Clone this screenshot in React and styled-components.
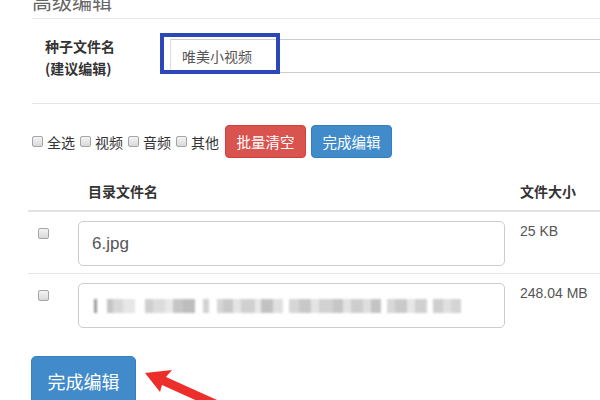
import React from 'react'
import styled, { createGlobalStyle } from 'styled-components'

const Global = createGlobalStyle`
  html, body { margin: 0; padding: 0; background: #fff; overflow: hidden; }
  body { font-family: "Liberation Sans", "Noto Sans CJK SC", sans-serif; color: #333; }
`

const blur = [
  { w: 3, c: '#9a9a9a' }, { w: 10, c: '#fff' }, { w: 6, c: '#c4c4c4' }, { w: 10, c: '#d8d8d8' },
  { w: 12, c: '#e6e6e6' }, { w: 10, c: '#fff' }, { w: 8, c: '#cfcfcf' }, { w: 12, c: '#dcdcdc' },
  { w: 8, c: '#e8e8e8' }, { w: 10, c: '#c6c6c6' }, { w: 12, c: '#bdbdbd' }, { w: 8, c: '#fff' },
  { w: 6, c: '#d2d2d2' }, { w: 8, c: '#fff' }, { w: 6, c: '#d6d6d6' }, { w: 10, c: '#c9c9c9' },
  { w: 8, c: '#e4e4e4' }, { w: 14, c: '#d0d0d0' }, { w: 6, c: '#e8e8e8' }, { w: 12, c: '#c2c2c2' },
  { w: 10, c: '#e0e0e0' }, { w: 6, c: '#fff' }, { w: 10, c: '#d6d6d6' }, { w: 12, c: '#c8c8c8' },
  { w: 8, c: '#e4e4e4' }, { w: 14, c: '#d2d2d2' }, { w: 10, c: '#c6c6c6' }, { w: 8, c: '#e2e2e2' },
  { w: 12, c: '#cdcdcd' }, { w: 8, c: '#dedede' }, { w: 10, c: '#c4c4c4' }, { w: 6, c: '#fff' },
  { w: 8, c: '#d8d8d8' }, { w: 12, c: '#cacaca' }, { w: 8, c: '#e6e6e6' }, { w: 12, c: '#d0d0d0' },
  { w: 6, c: '#fff' }, { w: 10, c: '#cfcfcf' }, { w: 8, c: '#e0e0e0' }, { w: 10, c: '#d4d4d4' },
]

const App = () => {
  return (
    <Page>
      <Global />
      <Title>高级编辑</Title>
      <FormRow>
        <FieldLabel>种子文件名<br />(建议编辑)</FieldLabel>
        <FieldWrap>
          <NameInput>唯美小视频</NameInput>
          <Highlight />
        </FieldWrap>
      </FormRow>

      <Toolbar>
        <Check /><CheckText>全选</CheckText>
        <Check /><CheckText>视频</CheckText>
        <Check /><CheckText>音频</CheckText>
        <Check /><CheckText>其他</CheckText>
        <Btn $danger>批量清空</Btn>
        <Btn>完成编辑</Btn>
      </Toolbar>

      <Table>
        <HeadRow>
          <span />
          <HeadCell $pad>目录文件名</HeadCell>
          <HeadCell>文件大小</HeadCell>
        </HeadRow>
        <Row>
          <CheckCell><Check /></CheckCell>
          <NameCell><FileBox>6.jpg</FileBox></NameCell>
          <SizeCell>25 KB</SizeCell>
        </Row>
        <Row $last>
          <CheckCell><Check /></CheckCell>
          <NameCell>
            <FileBox>
              <Blurred>
                {blur.map((b, i) => (
                  <BlurBit key={i} style={{ width: b.w, background: b.c }} />
                ))}
              </Blurred>
            </FileBox>
          </NameCell>
          <SizeCell>248.04 MB</SizeCell>
        </Row>
      </Table>

      <Footer>
        <BigBtn>完成编辑</BigBtn>
        <Arrow width="90" height="50" viewBox="0 0 90 50">
          <path d="M3 15 L30 12 L24 19 L75 42 L71 50 L20 27 L18 34 Z" fill="#ec2f2b" />
        </Arrow>
      </Footer>
    </Page>
  )
}

const Page = styled.div`
  margin-top: -14px;
  width: 600px;
`

const Title = styled.div`
  margin-left: 32px;
  font-family: "Noto Sans CJK SC", sans-serif;
  font-size: 20px;
  line-height: 32px;
  color: #666;
  border-bottom: 1px solid #e5e5e5;
`

const FormRow = styled.div`
  display: flex;
  margin-left: 32px;
  height: 85px;
  box-sizing: border-box;
  border-bottom: 1px solid #e5e5e5;
`

const FieldLabel = styled.div`
  margin: 16px 0 0 13px;
  width: 115px;
  font-family: "Noto Sans CJK SC", sans-serif;
  font-weight: bold;
  font-size: 14px;
  line-height: 22px;
  color: #333;
`

const FieldWrap = styled.div`
  position: relative;
  flex: 1;
  padding: 20px 0 0 10px;
`

const NameInput = styled.div`
  height: 34px;
  box-sizing: border-box;
  border: 1px solid #ccc;
  border-right: none;
  border-left-color: #ddd;
  padding-left: 11px;
  display: flex;
  align-items: center;
  font-family: "Noto Sans CJK SC", sans-serif;
  font-size: 14px;
  color: #555;
`

const Highlight = styled.div`
  position: absolute;
  left: 0;
  top: 14px;
  width: 120px;
  height: 41px;
  box-sizing: border-box;
  border: 4px solid #2b47b8;
  pointer-events: none;
`

const Toolbar = styled.div`
  display: flex;
  align-items: center;
  margin: 21px 0 0 32px;
  height: 33px;
`

const Check = styled.span`
  display: inline-block;
  width: 11px;
  height: 11px;
  box-sizing: border-box;
  border: 1px solid #a5a5a5;
  border-radius: 2px;
  background: linear-gradient(#f4f4f4, #d9d9d9);
  flex-shrink: 0;
`

const CheckText = styled.span`
  font-family: "Noto Sans CJK SC", sans-serif;
  font-size: 14px;
  color: #333;
  margin: 0 5px 0 4px;
`

const Btn = styled.button`
  width: 81px;
  height: 33px;
  padding: 0;
  margin-left: ${p => (p.$danger ? '1px' : '5px')};
  border: 1px solid ${p => (p.$danger ? '#d43f3a' : '#357ebd')};
  border-radius: 4px;
  background: ${p => (p.$danger ? '#d9534f' : '#428bca')};
  color: #fff;
  font-family: "Noto Sans CJK SC", sans-serif;
  font-size: 14.5px;
`

const Table = styled.div`
  margin: 14px 0 0 28px;
`

const HeadRow = styled.div`
  display: grid;
  grid-template-columns: 50px 442px 1fr;
  height: 38px;
  align-items: center;
  border-bottom: 2px solid #e2e2e2;
`

const HeadCell = styled.div`
  padding-left: ${p => (p.$pad ? '10px' : '0')};
  font-family: "Noto Sans CJK SC", sans-serif;
  font-weight: bold;
  font-size: 14px;
  color: #333;
`

const Row = styled.div`
  display: grid;
  grid-template-columns: 50px 442px 1fr;
  height: 62px;
  box-sizing: border-box;
  border-bottom: ${p => (p.$last ? 'none' : '1px solid #e5e5e5')};
`

const CheckCell = styled.div`
  padding: 13px 0 0 10px;
`

const NameCell = styled.div`
  padding: 9px 15px 0 0;
`

const FileBox = styled.div`
  height: 45px;
  box-sizing: border-box;
  border: 1px solid #ccc;
  border-radius: 5px;
  padding-left: 13px;
  display: flex;
  align-items: center;
  font-size: 17px;
  color: #555;
`

const SizeCell = styled.div`
  padding-top: 10px;
  font-size: 14px;
  line-height: 18px;
  color: #555;
`

const Blurred = styled.div`
  display: flex;
  align-items: center;
  height: 14px;
  margin-left: 2px;
  filter: blur(1px);
`

const BlurBit = styled.span`
  display: block;
  height: 14px;
  flex-shrink: 0;
`

const Footer = styled.div`
  position: relative;
  margin: 20px 0 0 31px;
`

const BigBtn = styled.button`
  width: 105px;
  height: 50px;
  border: 1px solid #3a80c0;
  border-radius: 5px;
  background: #428bca;
  color: #fff;
  font-family: "Noto Sans CJK SC", sans-serif;
  font-size: 18px;
`

const Arrow = styled.svg`
  position: absolute;
  left: 111px;
  top: 2px;
`

export default App
